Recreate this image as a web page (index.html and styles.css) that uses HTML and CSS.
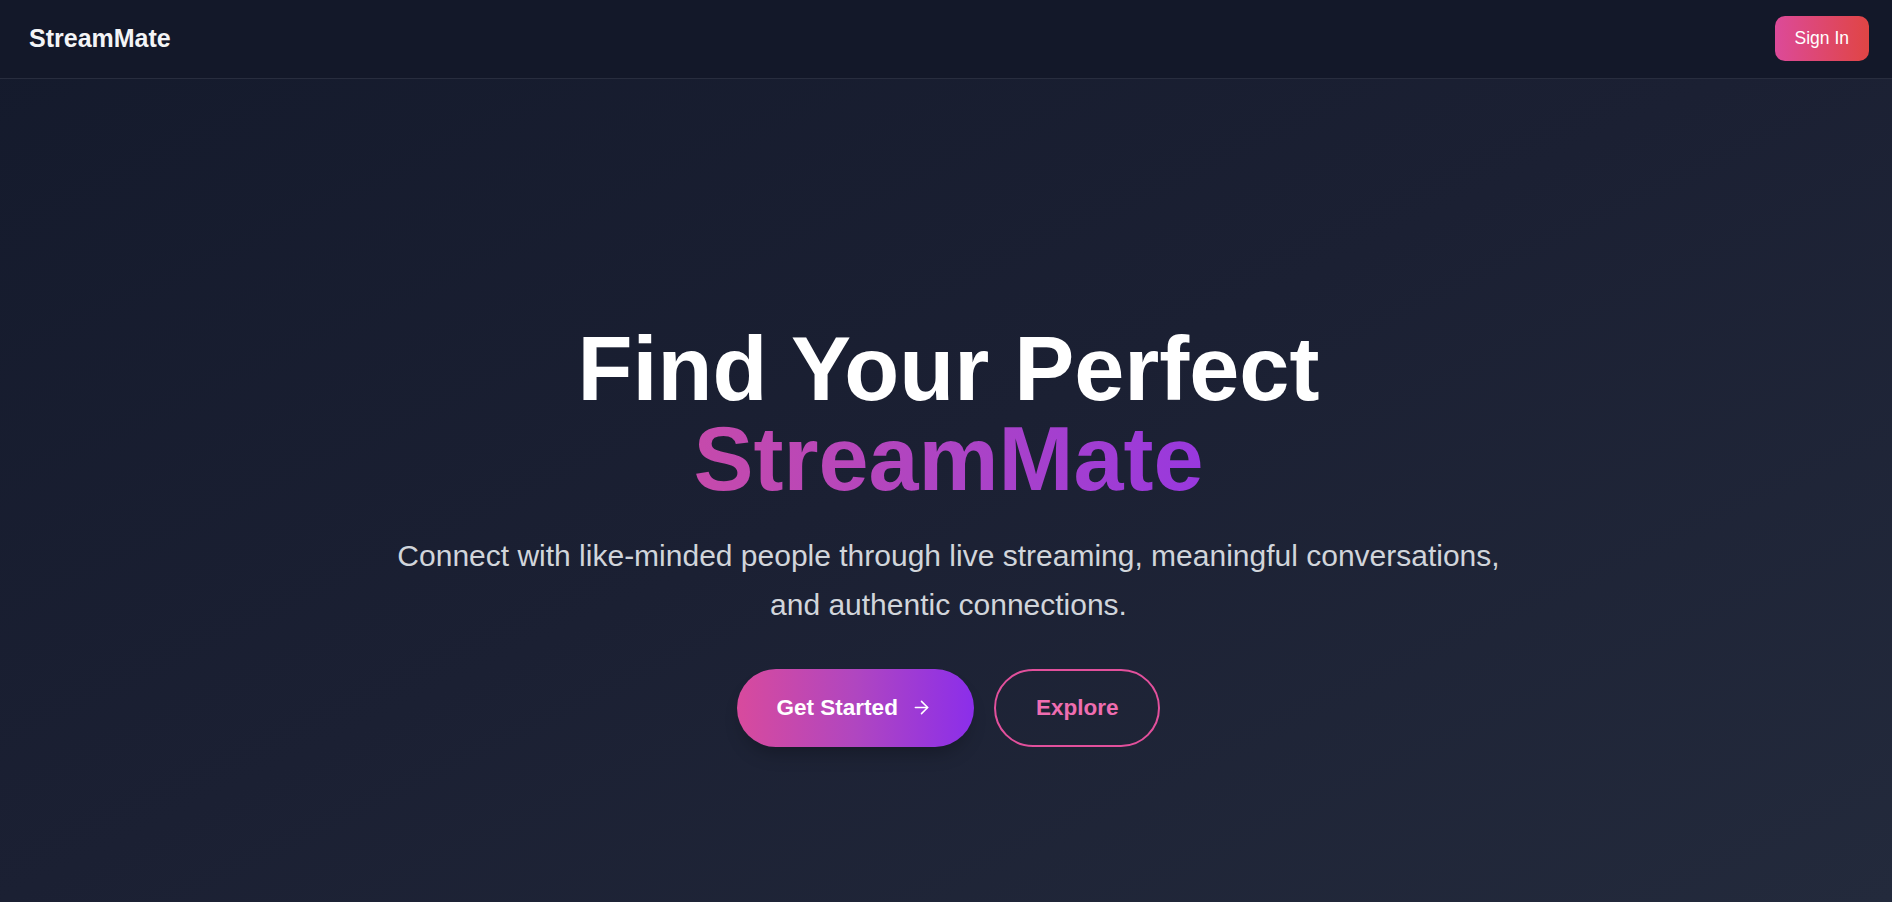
FILE: index.html
```html
<!DOCTYPE html>
<html lang="en">
<head>
<meta charset="utf-8">
<title>StreamMate</title>
<link rel="stylesheet" href="styles.css">
</head>
<body>
<div class="page">
  <header class="topbar">
    <div class="logo">StreamMate</div>
    <button class="signin">Sign In</button>
  </header>
  <main class="hero">
    <h1 class="title">
      <span class="title-line">Find Your Perfect</span>
      <span class="title-grad">StreamMate</span>
    </h1>
    <p class="subtitle">Connect with like-minded people through live streaming, meaningful conversations, and authentic connections.</p>
    <div class="actions">
      <button class="btn btn-primary">
        <span>Get Started</span>
        <svg class="arrow" viewBox="0 0 24 24" fill="none" stroke="currentColor" stroke-width="2" stroke-linecap="round" stroke-linejoin="round"><path d="M5 12h14"/><path d="m12 5 7 7-7 7"/></svg>
      </button>
      <button class="btn btn-outline">Explore</button>
    </div>
  </main>
</div>
</body>
</html>
```

FILE: styles.css
```css
* { box-sizing: border-box; }
html, body { margin: 0; padding: 0; height: 100%; }
body {
  font-family: "Liberation Sans", Arial, sans-serif;
  background: #171c2f;
  color: #fff;
}
.page {
  min-height: 100vh;
  display: flex;
  flex-direction: column;
  background: linear-gradient(to bottom right, #141a2c 0%, #1b2033 50%, #232a3c 100%);
}
.topbar {
  height: 79px;
  display: flex;
  align-items: center;
  justify-content: space-between;
  padding: 0 23px 1px 29px;
  background: #131829;
  border-bottom: 1px solid #282d3e;
}
.logo {
  font-size: 25px;
  font-weight: 700;
  color: #f3f4f6;
  line-height: 1;
}
.signin {
  font-family: inherit;
  font-size: 17.5px;
  line-height: 25px;
  color: #fff;
  border: none;
  border-radius: 10px;
  padding: 10px 20px;
  background: linear-gradient(90deg, #dc4a99, #e04544);
  cursor: pointer;
}
.hero {
  flex: 1;
  display: flex;
  flex-direction: column;
  align-items: center;
  padding-top: 245px;
  padding-left: 5px;
  text-align: center;
}
.title {
  margin: 0 0 28px;
  font-size: 90px;
  line-height: 90px;
  font-weight: 700;
  display: flex;
  flex-direction: column;
  align-items: center;
}
.title-line { color: #ffffff; }
.title-grad {
  background: linear-gradient(90deg, #c64aab 0%, #ad44c4 50%, #9838de 100%);
  -webkit-background-clip: text;
  background-clip: text;
  color: transparent;
}
.subtitle {
  margin: 0 0 39px;
  max-width: 1120px;
  font-size: 30px;
  line-height: 48.75px;
  color: #d1d5db;
}
.actions {
  display: flex;
  gap: 20px;
}
.btn {
  font-family: inherit;
  font-size: 22.5px;
  font-weight: 700;
  height: 78px;
  border-radius: 999px;
  display: inline-flex;
  align-items: center;
  justify-content: center;
  cursor: pointer;
}
.btn-primary {
  gap: 13px;
  padding: 0 42px 0 40px;
  border: none;
  color: #fff;
  background: linear-gradient(90deg, #d84a9d 0%, #b046c0 50%, #8b2eea 100%);
  box-shadow: 0 12px 20px -8px rgba(0, 0, 0, 0.3);
}
.arrow {
  width: 21px;
  height: 21px;
  stroke-width: 1.8;
}
.btn-outline {
  padding: 0 40px;
  background: transparent;
  border: 2.5px solid #e2509c;
  color: #ef6db0;
}
```
